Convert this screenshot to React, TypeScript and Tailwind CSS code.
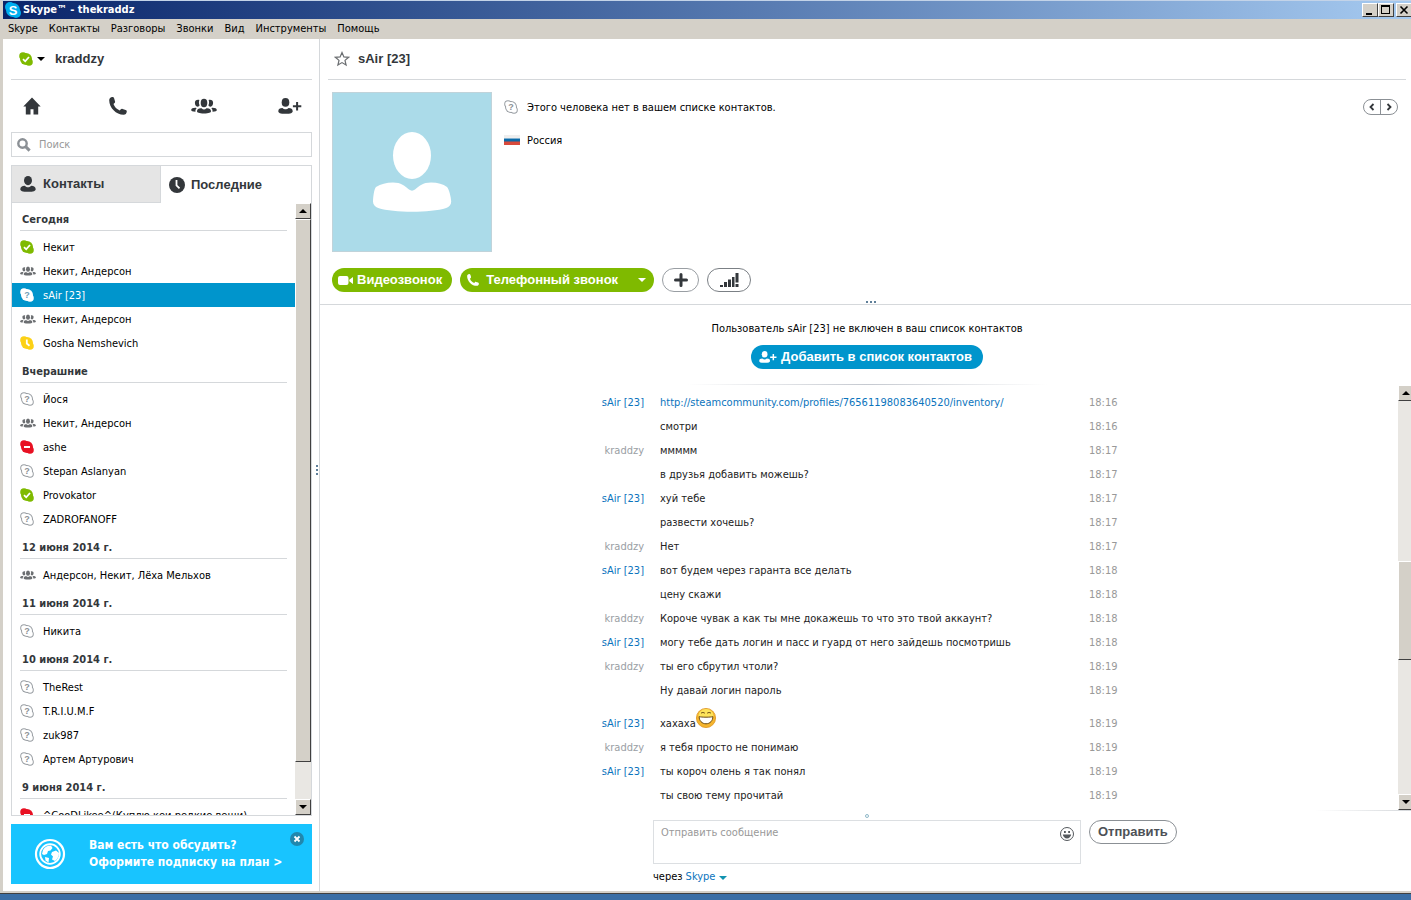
import type { ReactNode } from "react";
import clsx from "clsx";

type Status = "online" | "group" | "unknown" | "away" | "busy";

interface Contact {
  name: string;
  status: Status;
  selected?: boolean;
}

const groups: { title: string; contacts: Contact[] }[] = [
  {
    title: "Сегодня",
    contacts: [
      { name: "Некит", status: "online" },
      { name: "Некит, Андерсон", status: "group" },
      { name: "sAir [23]", status: "unknown", selected: true },
      { name: "Некит, Андерсон", status: "group" },
      { name: "Gosha Nemshevich", status: "away" },
    ],
  },
  {
    title: "Вчерашние",
    contacts: [
      { name: "Йося", status: "unknown" },
      { name: "Некит, Андерсон", status: "group" },
      { name: "ashe", status: "busy" },
      { name: "Stepan Aslanyan", status: "unknown" },
      { name: "Provokator", status: "online" },
      { name: "ZADROFANOFF", status: "unknown" },
    ],
  },
  {
    title: "12 июня 2014 г.",
    contacts: [{ name: "Андерсон, Некит, Лёха Мельхов", status: "group" }],
  },
  {
    title: "11 июня 2014 г.",
    contacts: [{ name: "Никита", status: "unknown" }],
  },
  {
    title: "10 июня 2014 г.",
    contacts: [
      { name: "TheRest", status: "unknown" },
      { name: "T.R.I.U.M.F", status: "unknown" },
      { name: "zuk987", status: "unknown" },
      { name: "Артем Артурович", status: "unknown" },
    ],
  },
  {
    title: "9 июня 2014 г.",
    contacts: [{ name: "^CooDLikee^(Куплю кеи,редкие вещи)", status: "busy" }],
  },
];

interface Message {
  author?: string;
  text: string;
  time: string;
  link?: boolean;
  laugh?: boolean;
}

const messages: Message[] = [
  {
    author: "sAir [23]",
    text: "http://steamcommunity.com/profiles/76561198083640520/inventory/",
    time: "18:16",
    link: true,
  },
  { text: "смотри", time: "18:16" },
  { author: "kraddzy", text: "ммммм", time: "18:17" },
  { text: "в друзья добавить можешь?", time: "18:17" },
  { author: "sAir [23]", text: "хуй тебе", time: "18:17" },
  { text: "развести хочешь?", time: "18:17" },
  { author: "kraddzy", text: "Нет", time: "18:17" },
  { author: "sAir [23]", text: "вот будем через гаранта все делать", time: "18:18" },
  { text: "цену скажи", time: "18:18" },
  { author: "kraddzy", text: "Короче чувак а как ты мне докажешь то что это твой аккаунт?", time: "18:18" },
  { author: "sAir [23]", text: "могу тебе дать логин и пасс и гуард от него зайдешь посмотришь", time: "18:18" },
  { author: "kraddzy", text: "ты его сбрутил чтоли?", time: "18:19" },
  { text: "Ну давай логин пароль", time: "18:19" },
  { author: "sAir [23]", text: "хахаха", time: "18:19", laugh: true },
  { author: "kraddzy", text: "я тебя просто не понимаю", time: "18:19" },
  { author: "sAir [23]", text: "ты короч олень я так понял", time: "18:19" },
  { text: "ты свою тему прочитай", time: "18:19" },
];

const menu = ["Skype", "Контакты", "Разговоры", "Звонки", "Вид", "Инструменты", "Помощь"];

const GroupIcon = ({ className }: { className?: string }) => (
  <svg viewBox="0 0 26 16" className={className} fill="currentColor" aria-hidden="true">
    <ellipse cx="13" cy="5" rx="3.300" ry="4.200" />
    <path d="M6 13.200c0-2.400 2-3.200 4.600-3 .9.8 1.500 1.200 2.400 1.200s1.500-.4 2.400-1.200c2.600-.2 4.600.6 4.600 3 0 1.400-2 2.200-7 2.200s-7-.8-7-2.200z" />
    <path d="M8.400 2C5.600 1.300 3.900 2.700 3.900 4.800c0 2 1 3.800 2.600 3.900 1.200 0 1.800-.6 2.100-1.400-.8-1.700-.9-3.600-.2-5.300zM17.600 2c2.800-.7 4.500.7 4.500 2.800 0 2-1 3.800-2.600 3.900-1.200 0-1.800-.6-2.100-1.400.8-1.700.9-3.600.2-5.300z" />
    <path d="M4.900 9.800C2 9.700.2 10.600.2 12.100c0 1 1.300 1.500 4.300 1.700-.2-1.600.2-2.900 1.100-3.600zM21.100 9.800c2.900-.1 4.700.8 4.700 2.300 0 1-1.300 1.500-4.300 1.700.2-1.600-.2-2.900-1.100-3.600z" />
  </svg>
);

const PersonIcon = ({ className }: { className?: string }) => (
  <svg viewBox="0 0 16 16" className={className} fill="currentColor" aria-hidden="true">
    <ellipse cx="8" cy="4.600" rx="4" ry="4.600" />
    <path d="M.3 13.200C.3 10.900 2 9.900 4.800 9.800 6 10.900 6.900 11.300 8 11.300s2-.4 3.200-1.500c2.800.1 4.500 1.100 4.500 3.400 0 1.700-2 2.600-7.700 2.600S.3 14.900.3 13.200z" />
  </svg>
);

const AddPersonIcon = ({ className }: { className?: string }) => (
  <svg viewBox="0 0 24 16" className={className} fill="currentColor" aria-hidden="true">
    <ellipse cx="7.500" cy="4.400" rx="3.800" ry="4.400" />
    <path d="M.3 13.200c0-2.300 1.600-3.200 4.200-3.300 1.100 1 2 1.400 3 1.400s1.900-.4 3-1.400c2.600.1 4.200 1 4.200 3.300 0 1.700-1.900 2.600-7.200 2.600S.3 14.900.3 13.200z" />
    <path d="M18.100 4h2v3.200h3.200v2h-3.200v3.200h-2V9.200h-3.200v-2h3.200z" />
  </svg>
);

const PhoneIcon = ({ className }: { className?: string }) => (
  <svg viewBox="0 0 18 18" className={className} fill="currentColor" aria-hidden="true">
    <path d="M.2 3.200C.2 1.500 1.500.2 3.400.1c.9 0 1.400.3 1.700 1.200l.9 3c.2.8.1 1.300-.5 1.800l-1 .9c1 3 3.300 5.300 6.300 6.400l1-1.100c.5-.5 1-.7 1.800-.4l3 1c.9.3 1.200.8 1.200 1.600-.1 2-1.400 3.300-3.200 3.300C7.200 17.700.2 10.700.2 3.200z" />
  </svg>
);

const StatusIcon = ({ status, selected }: { status: Status; selected?: boolean }) => {
  if (status === "group") {
    return <GroupIcon className="h-[10px] w-4 text-[#6b6e71]" />;
  }
  if (status === "unknown") {
    return (
      <svg viewBox="0 0 14 14" className="size-[14px]" aria-hidden="true">
        <g fill={selected ? "#fff" : "#999ea3"}>
          <circle cx="4" cy="4" r="3.800" />
          <circle cx="10" cy="10" r="3.800" />
          <circle cx="7" cy="7" r="6" />
        </g>
        {!selected && (
          <g fill="#fff">
            <circle cx="4" cy="4" r="2.800" />
            <circle cx="10" cy="10" r="2.800" />
            <circle cx="7" cy="7" r="5" />
          </g>
        )}
        <text x="7" y="10.300" textAnchor="middle" fontSize="9" fontWeight="bold" fontFamily="Liberation Sans, sans-serif" fill={selected ? "#6f9db5" : "#8b9095"}>
          ?
        </text>
      </svg>
    );
  }
  return (
    <svg viewBox="0 0 14 14" className={clsx("size-[14px]", status === "online" && "text-[#7fba00]", status === "away" && "text-[#fcd116]", status === "busy" && "text-[#e81123]")} aria-hidden="true">
      <g fill="currentColor">
        <circle cx="4" cy="4" r="3.800" />
        <circle cx="10" cy="10" r="3.800" />
        <circle cx="7" cy="7" r="6" />
      </g>
      {status === "online" && <path d="M4 7.200l2.200 2.100L10 5" fill="none" stroke="#fff" strokeWidth="1.800" />}
      {status === "away" && <path d="M6.800 3.500v4l2.700 2.300" fill="none" stroke="#fff" strokeWidth="1.800" />}
      {status === "busy" && <path d="M4 7h6" stroke="#fff" strokeWidth="2" />}
    </svg>
  );
};

const Caret = ({ up, className }: { up?: boolean; className?: string }) => (
  <svg viewBox="0 0 8 4" className={clsx("h-1 w-2", className)} fill="currentColor" aria-hidden="true">
    <path d={up ? "M4 0l4 4H0z" : "M0 0h8L4 4z"} />
  </svg>
);

const bevel = "border border-t-white border-l-white border-r-[#404040] border-b-[#404040] bg-[#d4d0c8]";

const ScrollBar = ({ label, children }: { label: string; children: ReactNode }) => (
  <div className="flex w-4 shrink-0 flex-col bg-[#e9e7e3] text-black">
    <button className={clsx(bevel, "flex h-4 items-center justify-center")} aria-label={`${label}: вверх`}>
      <Caret up />
    </button>
    <div className="flex flex-1 flex-col">{children}</div>
    <button className={clsx(bevel, "flex h-4 items-center justify-center")} aria-label={`${label}: вниз`}>
      <Caret />
    </button>
  </div>
);

const TitleBar = () => (
  <header className="border-t border-l-3 border-t-[#c3d3e8] border-l-[#d4d0c8]">
    <div className="flex h-[18px] items-center bg-linear-to-r from-[#0a246a] to-[#a6caf0] pl-[2px]">
      <svg viewBox="0 0 16 16" className="size-4" aria-hidden="true">
        <g fill="#00aff0">
          <circle cx="5" cy="5" r="5" />
          <circle cx="11" cy="11" r="5" />
          <circle cx="8" cy="8" r="7" />
        </g>
        <text x="8" y="12.500" textAnchor="middle" fontSize="13" fontWeight="bold" fontFamily="Liberation Sans, sans-serif" fill="#fff">
          S
        </text>
      </svg>
      <h1 className="ml-[2px] flex-1 font-bold text-white">Skype™ - thekraddz</h1>
      <button className={clsx(bevel, "h-[14px] w-4")} aria-label="Свернуть">
        <svg viewBox="0 0 14 12" className="size-full">
          <path d="M3 9h6v2H3z" />
        </svg>
      </button>
      <button className={clsx(bevel, "h-[14px] w-4")} aria-label="Развернуть">
        <svg viewBox="0 0 14 12" className="size-full">
          <path d="M2 1h9v9H2zM3 3v6h7V3z" fillRule="evenodd" />
        </svg>
      </button>
      <button className={clsx(bevel, "ml-[2px] h-[14px] w-[15px] border-r-0")} aria-label="Закрыть">
        <svg viewBox="0 0 14 12" className="size-full">
          <path d="M3.500 2.500l7 7M10.500 2.500l-7 7" stroke="#000" strokeWidth="1.600" />
        </svg>
      </button>
    </div>
  </header>
);

const Sidebar = () => (
  <aside className="relative flex w-[317px] shrink-0 flex-col border-r border-[#d5d8db] pr-[7px] pb-[7px] pl-2">
    <div className="flex h-[41px] items-center border-b border-[#d5d8db] pl-2">
      <button className="flex items-center gap-1" aria-label="Сетевой статус">
        <StatusIcon status="online" />
        <Caret className="text-black" />
      </button>
      <a href="#" className="ml-[10px] font-[Liberation_Sans,sans-serif] text-[13px] font-bold text-[#33373b]">
        kraddzy
      </a>
    </div>

    <nav className="flex h-[52px] items-center justify-between pr-[2px] pl-px text-[#33373b]">
      <button className="flex w-10 justify-center" aria-label="Домашняя страница">
        <svg viewBox="0 0 18 18" className="size-[18px]" fill="currentColor">
          <path d="M9 .5L.3 9.400h2.500v8h4.700v-5.200h3v5.200h4.700v-8h2.500z" />
        </svg>
      </button>
      <button className="flex w-10 justify-center" aria-label="Позвонить">
        <PhoneIcon className="size-[18px]" />
      </button>
      <button className="flex w-10 justify-center" aria-label="Создать группу">
        <GroupIcon className="h-4 w-[26px]" />
      </button>
      <button className="flex w-10 justify-center" aria-label="Добавить контакт">
        <AddPersonIcon className="h-4 w-6" />
      </button>
    </nav>

    <label className="flex h-[25px] items-center gap-2 border border-[#d5d8db] px-[5px]">
      <svg viewBox="0 0 14 14" className="size-[14px] text-[#8b9095]" aria-hidden="true">
        <circle cx="5.500" cy="5.500" r="4.200" fill="none" stroke="currentColor" strokeWidth="2.400" />
        <path d="M8.600 8.600l4 4" stroke="currentColor" strokeWidth="3" />
      </svg>
      <input type="text" aria-label="Поиск" placeholder="Поиск" className="min-w-0 flex-1 pt-[2px] outline-none placeholder:text-[#999]" />
    </label>

    <div className="mt-2 flex h-[38px] border-x border-t border-[#d5d8db] font-[Liberation_Sans,sans-serif] text-[13px] font-bold text-[#33373b]" role="tablist">
      <button role="tab" className="flex w-[149px] items-center gap-[7px] border-r border-b border-[#d5d8db] bg-[#e5e5e5] pl-2">
        <PersonIcon className="size-4" />
        Контакты
      </button>
      <button role="tab" aria-selected className="flex flex-1 items-center gap-[6px] pl-2">
        <svg viewBox="0 0 16 16" className="size-4" aria-hidden="true">
          <circle cx="8" cy="8" r="8" fill="currentColor" />
          <path d="M7.500 3v5.300l3 3" fill="none" stroke="#fff" strokeWidth="1.800" />
        </svg>
        Последние
      </button>
    </div>

    <div className="flex min-h-0 flex-1 border border-t-0 border-[#d5d8db]">
      <div className="min-w-0 flex-1 overflow-hidden">
        {groups.map((group) => (
          <section key={group.title}>
            <h2 className="mr-2 mb-1 ml-2 flex h-7 items-center border-b border-[#d5d8db] pt-[7px] pl-[2px] font-bold text-[#33373b]">
              {group.title}
            </h2>
            {group.contacts.map((contact, i) => (
              <button
                key={i}
                className={clsx(
                  "flex h-6 w-full items-center pl-2 text-left whitespace-nowrap",
                  contact.selected && "bg-[#0095cc] text-white"
                )}
              >
                <span className="flex w-[23px] shrink-0">
                  <StatusIcon status={contact.status} selected={contact.selected} />
                </span>
                <span className="pt-[2px]">{contact.name}</span>
              </button>
            ))}
          </section>
        ))}
      </div>
      <ScrollBar label="Список">
        <div className={clsx(bevel, "flex-[544]")} />
        <div className="flex-[37]" />
      </ScrollBar>
    </div>

    <div className="relative mt-2 flex h-[60px] items-center bg-[#18c4ff] pl-[23px] text-white">
      <svg viewBox="0 0 32 32" className="size-8" aria-hidden="true">
        <circle cx="16" cy="16" r="14" fill="none" stroke="#fff" strokeWidth="2.200" />
        <circle cx="16" cy="16" r="9.800" fill="none" stroke="#fff" strokeWidth="1.800" />
        <path d="M9 12c2-3.500 4.500-4.500 8-4.500l1.500 2.500-2 2.500-2.500.5-1 3-3 1-2-1zM18 14l4-1.500 3 2.500c0 3.500-1.500 6-4 8l-3-1.500 1-3-2-2zM11 19l4 1-.5 4.500-3-2z" fill="#fff" />
      </svg>
      <a href="#" className="ml-[23px] text-[12px] leading-[17px] font-bold">
        Вам есть что обсудить?
        <br />
        Оформите подписку на план &gt;
      </a>
      <button className="absolute top-2 right-2 flex size-[14px] items-center justify-center rounded-full bg-[#2187ad]" aria-label="Закрыть рекламу">
        <svg viewBox="0 0 8 8" className="size-2">
          <path d="M1.500 1.500l5 5M6.500 1.500l-5 5" stroke="#fff" strokeWidth="1.800" />
        </svg>
      </button>
    </div>

    <svg viewBox="0 0 2 10" className="absolute top-1/2 right-px h-[10px] w-[2px]" fill="#5f7f99" aria-hidden="true">
      <path d="M0 0h2v2H0zM0 4h2v2H0zM0 8h2v2H0z" />
    </svg>
  </aside>
);

const Profile = () => (
  <section className="relative border-b border-[#d5d8db] pr-[5px] pb-3">
    <div className="ml-2 flex h-[41px] items-center border-b border-[#d5d8db] pl-[6px]">
      <button aria-label="В избранное">
        <svg viewBox="0 0 16 16" className="size-4" aria-hidden="true">
          <path d="M8 1.500l1.900 4.400 4.700.4-3.600 3.100 1.100 4.700L8 11.600l-4.100 2.500L5 9.400 1.400 6.300l4.700-.4z" fill="none" stroke="#6b6e71" strokeWidth="1.200" />
        </svg>
      </button>
      <h2 className="ml-2 font-[Liberation_Sans,sans-serif] text-[13px] font-bold text-[#33373b]">sAir [23]</h2>
    </div>

    <div className="mt-3 ml-3 flex pr-2">
      <svg viewBox="0 0 160 160" className="size-40 shrink-0" role="img" aria-label="sAir [23]">
        <path d="M0 0h160v160H0z" fill="#c0d3da" />
        <path d="M1 1h158v158H1z" fill="#abdbe9" />
        <ellipse cx="80" cy="63.500" rx="19" ry="23.500" fill="#fff" />
        <path d="M44 95c5-3 10-4.500 17-4.500 8 0 12 3.500 16 7 2 1.500 4 1.500 6 0 4-3.500 8-7 16-7 7 0 12 1.500 16 4.500 2 2 4 10 4.200 14.500 0 3-2 5.500-5 6.500-16 5-52 5-68 0-3-1-5.200-3.500-5.200-6.500C41.200 105 42 97 44 95z" fill="#fff" />
      </svg>
      <div className="ml-3 flex-1">
        <p className="flex h-[30px] items-center gap-[9px]">
          <StatusIcon status="unknown" />
          <span className="pt-[2px]">Этого человека нет в вашем списке контактов.</span>
        </p>
        <p className="mt-[9px] flex items-center gap-[7px]">
          <svg viewBox="0 0 16 10" className="h-[10px] w-4" aria-hidden="true">
            <path d="M0 0h16v3.500H0z" fill="#eee" />
            <path d="M0 3.500h16V7H0z" fill="#0b6aa8" />
            <path d="M0 6.500h16V10H0z" fill="#d84a3c" />
          </svg>
          <span className="pt-[2px]">Россия</span>
        </p>
      </div>
      <div className="mt-[7px] flex h-4 w-[35px] rounded-full border border-[#8b9095] text-[#33373b]">
        <button className="flex flex-1 items-center justify-center border-r border-[#8b9095]" aria-label="Назад">
          <svg viewBox="0 0 6 8" className="h-2 w-[6px]">
            <path d="M4.500 1l-3 3 3 3" fill="none" stroke="currentColor" strokeWidth="1.800" />
          </svg>
        </button>
        <button className="flex flex-1 items-center justify-center" aria-label="Вперёд">
          <svg viewBox="0 0 6 8" className="h-2 w-[6px]">
            <path d="M1.500 1l3 3-3 3" fill="none" stroke="currentColor" strokeWidth="1.800" />
          </svg>
        </button>
      </div>
    </div>

    <div className="mt-4 ml-3 flex gap-2 font-[Liberation_Sans,sans-serif] text-[13px] font-bold text-white">
      <button className="flex h-6 items-center gap-1 rounded-full bg-[#7fba00] pr-[10px] pl-[6px]">
        <svg viewBox="0 0 15 9" className="h-[9px] w-[15px]" fill="currentColor" aria-hidden="true">
          <path d="M2 0h6.500a2 2 0 012 2v5a2 2 0 01-2 2H2a2 2 0 01-2-2V2a2 2 0 012-2zM11.300 3.700L15 1v7l-3.700-2.700z" />
        </svg>
        Видеозвонок
      </button>
      <button className="flex h-6 items-center rounded-full bg-[#7fba00] pr-2 pl-[7px]">
        <PhoneIcon className="mr-[7px] size-3" />
        Телефонный звонок
        <Caret className="ml-5" />
      </button>
      <button className="flex h-6 w-[37px] items-center justify-center rounded-full border border-[#999ea3] text-[#33373b]" aria-label="Добавить">
        <svg viewBox="0 0 14 14" className="size-[14px]">
          <path d="M7 1.500v11M1.500 7h11" stroke="currentColor" strokeWidth="3" strokeLinecap="round" />
        </svg>
      </button>
      <button className="flex h-6 w-11 items-center justify-center rounded-full border border-[#7b8085] text-[#33373b]" aria-label="Качество связи">
        <svg viewBox="0 0 20 14" className="h-[14px] w-5" fill="currentColor">
          <path d="M1 12h3v2H1zM5 9h3v5H5zM9 6.500h3V14H9zM13 4h2.500v10H13zM16.500 0h3v9.500h-3zM16.500 11h3v3h-3z" />
        </svg>
      </button>
    </div>
    <svg viewBox="0 0 10 2" className="absolute bottom-px left-1/2 h-[2px] w-[10px]" fill="#5f7f99" aria-hidden="true">
      <path d="M0 0h2v2H0zM4 0h2v2H4zM8 0h2v2H8z" />
    </svg>
  </section>
);

const LaughIcon = () => (
  <svg viewBox="0 0 20 20" className="mb-2 size-5" role="img" aria-label="смех">
    <circle cx="10" cy="10" r="9.600" fill="#f5b52e" stroke="#dd9420" strokeWidth=".8" />
    <ellipse cx="10" cy="7.500" rx="7.500" ry="6.500" fill="#fde35a" />
    <path d="M5 5.200c1-.9 2.800-.9 3.800 0M11.200 5.200c1-.9 2.800-.9 3.800 0" fill="none" stroke="#6b4a12" />
    <path d="M3.200 8.600c2 .8 11.600.8 13.600 0 .2 4-2.800 7.200-6.800 7.200s-7-3.200-6.800-7.200z" fill="#fff" stroke="#6b4a12" />
  </svg>
);

const Chat = () => (
  <section className="flex min-h-0 flex-1 flex-col">
    <div className="flex flex-col items-center pt-[15px] pl-[3px]">
      <p className="leading-[18px]">Пользователь sAir [23] не включен в ваш список контактов</p>
      <button className="mt-[7px] flex h-6 items-center gap-1 rounded-full bg-[#0095cc] pr-[11px] pl-2 font-[Liberation_Sans,sans-serif] text-[13px] font-bold text-white">
        <AddPersonIcon className="h-3 w-[18px]" />
        Добавить в список контактов
      </button>
      <div className="mt-[15px] h-px w-[360px] bg-linear-to-r from-transparent via-[#c5c9d0] to-transparent" />
    </div>

    <div className="flex min-h-0 flex-1">
      <ul className="min-w-0 flex-1 overflow-hidden pt-[6px] pl-4 text-[#222]">
        {messages.map((message, i) => (
          <li
            key={i}
            className={clsx("grid grid-cols-[1fr_428px_1fr] items-end leading-6", message.laugh ? "h-[33px]" : "h-6")}
          >
            <span className={clsx("pr-[9px] text-right", message.author === "kraddzy" ? "text-[#999ea3]" : "text-[#0b74bd]")}>
              {message.author}
            </span>
            <span className="flex items-end pl-[7px] whitespace-nowrap">
              {message.link ? (
                <a href="#" className="text-[#0b74bd]">
                  {message.text}
                </a>
              ) : (
                message.text
              )}
              {message.laugh && <LaughIcon />}
            </span>
            <time className="pl-2 text-[#999]">{message.time}</time>
          </li>
        ))}
      </ul>
      <div className="flex w-[13px] overflow-hidden">
        <ScrollBar label="Разговор">
          <div className="flex-[161]" />
          <div className={clsx(bevel, "flex-[97]")} />
          <div className="flex-[135]" />
        </ScrollBar>
      </div>
    </div>

    <div className="h-px w-24 self-end bg-linear-to-r from-transparent to-[#d5d8db]" />
    <form className="grid grid-cols-[1fr_428px_1fr] pl-[3px]" onSubmit={(e) => e.preventDefault()}>
      <div className="col-start-2 flex h-[9px] items-center justify-center">
        <span className="size-1 rounded-full border border-[#8fb8c8]" />
      </div>
      <div className="col-start-2 flex h-11 items-start border border-[#dcdfe2] pt-[5px] pr-[5px] pl-[7px]">
        <textarea
          aria-label="Отправить сообщение"
          placeholder="Отправить сообщение"
          className="h-8 flex-1 resize-none leading-[14px] outline-none placeholder:text-[#999]"
        />
        <button type="button" aria-label="Смайлики">
          <svg viewBox="0 0 16 16" className="size-4" aria-hidden="true">
            <circle cx="8" cy="8" r="6.500" fill="none" stroke="#55595d" />
            <path d="M5 5h1.800v2H5zM9.200 5H11v2H9.200zM3.800 8.600h8.400c-.3 2.400-2 3.900-4.200 3.900s-3.900-1.500-4.200-3.900z" fill="#55595d" />
          </svg>
        </button>
      </div>
      <button className="ml-2 h-6 w-fit rounded-full border border-[#8b9095] px-2 font-[Liberation_Sans,sans-serif] text-[13px] font-bold text-[#4d5156]">
        Отправить
      </button>
      <div className="col-start-2 flex h-[27px] items-center gap-[3px]">
        через
        <button type="button" className="flex items-center gap-1 text-[#0b74bd]">
          Skype <Caret className="text-[#1293b0]" />
        </button>
      </div>
    </form>
  </section>
);

const App = () => (
  <div className="flex h-screen flex-col overflow-hidden bg-white font-['DejaVu_Sans_Condensed','DejaVu_Sans',sans-serif] text-[11px] text-black">
    <TitleBar />
    <nav className="flex h-5 items-center gap-[11px] bg-[#d4d0c8] pt-px pl-2">
      {menu.map((item) => (
        <button key={item}>{item}</button>
      ))}
    </nav>
    <div className="flex min-h-0 flex-1 border-l-3 border-[#d4d0c8]">
      <Sidebar />
      <main className="flex min-w-0 flex-1 flex-col">
        <Profile />
        <Chat />
      </main>
    </div>
    <footer className="h-[9px] border-t-2 border-[#d4d0c8] bg-[#3a6ea5]">
      <div className="h-px bg-[#404040]" />
    </footer>
  </div>
);

export default App;
